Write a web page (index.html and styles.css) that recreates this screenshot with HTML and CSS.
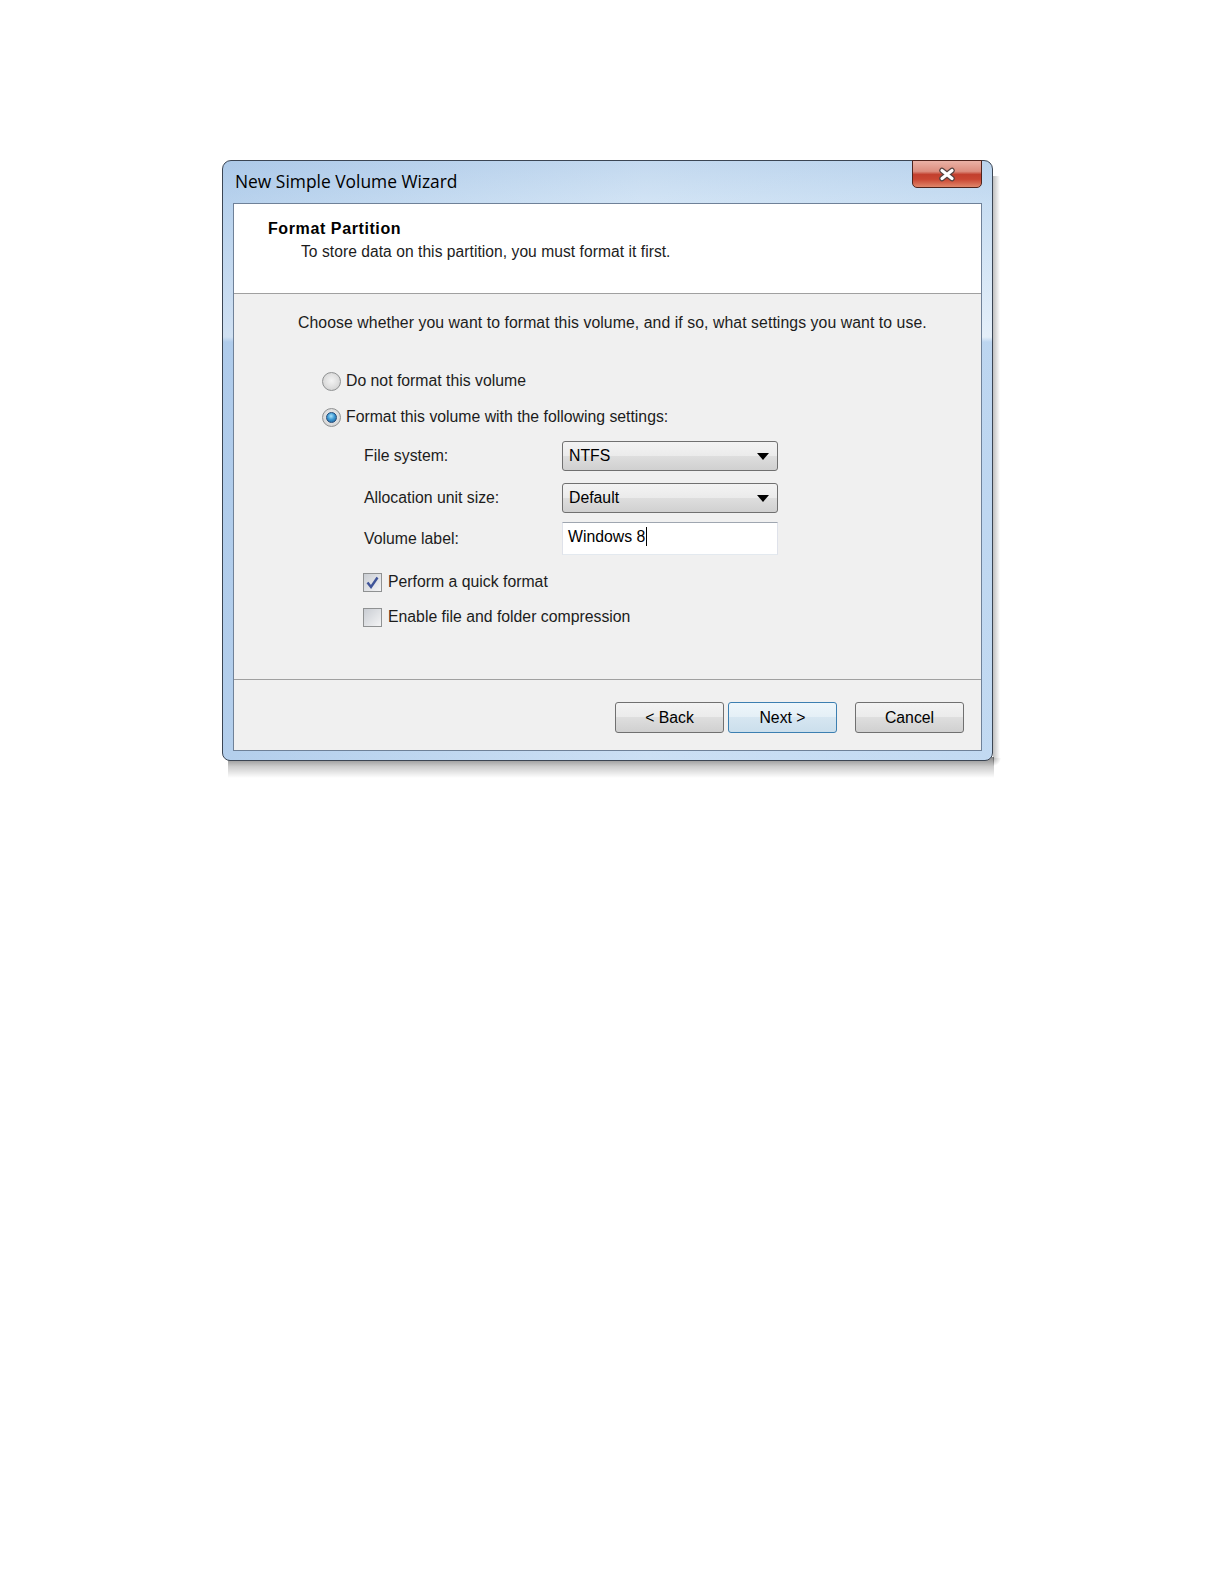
FILE: index.html
```html
<!DOCTYPE html>
<html>
<head lang="en">
    <meta charset="UTF-8">
    <title>New Simple Volume Wizard</title>
    <link rel="stylesheet" href="styles.css">
</head>
<body>
<div class="desk">
<div id="wizard" class="window">
    <div class="titlebar">
        <span class="caption">New Simple Volume Wizard</span>
        <span class="close">
            <svg width="20" height="15" viewBox="0 0 20 15">
                <path d="M5 3.5 L15 11.5 M15 3.5 L5 11.5" stroke="#55413f" stroke-width="5.5" stroke-linecap="round"/>
                <path d="M5 3.5 L15 11.5 M15 3.5 L5 11.5" stroke="#fff" stroke-width="3.2" stroke-linecap="round"/>
            </svg>
        </span>
    </div>
    <div class="client">
        <div class="header">
            <h1>Format Partition</h1>
            <p>To store data on this partition, you must format it first.</p>
        </div>
        <div class="content">
            <p class="intro">Choose whether you want to format this volume, and if so, what settings you want to use.</p>
            <div class="option first"><span class="radio"></span>Do not format this volume</div>
            <div class="option"><span class="radio checked"></span>Format this volume with the following settings:</div>
            <div class="settings">
                <div class="field first"><span class="label">File system:</span><span class="combo">NTFS<i class="arrow"></i></span></div>
                <div class="field"><span class="label">Allocation unit size:</span><span class="combo">Default<i class="arrow"></i></span></div>
                <div class="field last"><span class="label">Volume label:</span><span class="textbox">Windows 8<i class="caret"></i></span></div>
            </div>
            <div class="check first">
                <span class="box">
                    <svg width="13" height="13" viewBox="0 0 13 13">
                        <path d="M1.5 6.5 L5 11 L11.5 1.5" fill="none" stroke="#3f5499" stroke-width="2.4"/>
                    </svg>
                </span>Perform a quick format
            </div>
            <div class="check"><span class="box"></span>Enable file and folder compression</div>
        </div>
        <div class="footer">
            <span class="btn back">&lt; Back</span>
            <span class="btn default">Next &gt;</span>
            <span class="btn">Cancel</span>
        </div>
    </div>
</div>
</div>
</body>
</html>
```

FILE: styles.css
```css
body, h1, p {
    margin: 0;
    padding: 0;
}

body {
    background: #fff;
    font-family: "Liberation Sans", Arial, sans-serif;
    font-size: 15.8px;
    color: #1c1c1c;
}

/* window shadow, drawn with gradients around the frame */
.desk {
    width: 771px;
    margin: 160px 0 0 222px;
    padding: 0 8px 18px 0;
    background:
        linear-gradient(to bottom, rgba(0, 0, 0, 0.48), rgba(0, 0, 0, 0.2) 45%, rgba(0, 0, 0, 0)) no-repeat 6px 597px / 766px 21px,
        linear-gradient(to right, rgba(0, 0, 0, 0.25), rgba(0, 0, 0, 0)) no-repeat 771px 16px / 7px 582px,
        radial-gradient(circle at 0 0, rgba(0, 0, 0, 0.3), rgba(0, 0, 0, 0) 8px) no-repeat 771px 598px / 8px 12px;
}

.window {
    width: 771px;
    height: 601px;
    box-sizing: border-box;
    padding: 0 10px 9px;
    border: 1px solid #3b4553;
    border-radius: 9px 9px 8px 8px;
    background:
        linear-gradient(to right, rgba(150, 185, 225, 0.35), rgba(255, 255, 255, 0.15) 55%, rgba(190, 215, 240, 0.2)),
        linear-gradient(to bottom, #b9d2ec 0, #cadff3 42px, #dceaf7 110px, #e9f2fb 160px, #eef5fb 176px, #bcd5f0 181px, #c3daf2 100%);
}

.titlebar {
    height: 42px;
    display: flex;
    justify-content: space-between;
    align-items: flex-start;
}

.caption {
    align-self: center;
    padding: 0 0 2px 2px;
    font-family: "Open Sans", sans-serif;
    font-size: 17.4px;
    color: #000;
}

.close {
    width: 70px;
    height: 28px;
    box-sizing: border-box;
    margin-top: -1px;
    border: 1px solid #4f241d;
    border-radius: 0 0 5px 5px;
    background: linear-gradient(to bottom, #eab2a6 0, #dc8d7e 40%, #c2402e 52%, #c94632 70%, #e0866a 100%);
    display: flex;
    justify-content: center;
    align-items: center;
}

.client {
    height: 548px;
    box-sizing: border-box;
    border: 1px solid #6f8198;
    background: #f0f0f0;
    display: flex;
    flex-direction: column;
}

.header {
    height: 90px;
    box-sizing: border-box;
    padding: 15px 0 0 34px;
    background: #fff;
    border-bottom: 1px solid #a0a0a0;
}

.header h1 {
    font-size: 16px;
    line-height: 20px;
    font-weight: bold;
    letter-spacing: 0.6px;
    color: #000;
}

.header p {
    margin: 3px 0 0 33px;
    font-size: 15.6px;
    line-height: 20px;
    letter-spacing: 0.05px;
}

.content {
    height: 385px;
    box-sizing: border-box;
    padding: 19px 0 0 64px;
}

.intro {
    line-height: 20px;
    letter-spacing: 0.07px;
}

.option {
    display: flex;
    align-items: center;
    height: 24px;
    margin: 12px 0 0 24px;
}

.option.first {
    margin-top: 36px;
}

.radio {
    width: 19px;
    height: 19px;
    box-sizing: border-box;
    margin-right: 5px;
    border: 1px solid #8f9192;
    border-radius: 50%;
    background: radial-gradient(circle at 50% 45%, #f4f4f4 0, #e2e2e2 45%, #c9c9c9 100%);
    display: flex;
    justify-content: center;
    align-items: center;
}

.radio.checked::after {
    content: "";
    width: 9px;
    height: 9px;
    border: 1px solid #234a78;
    border-radius: 50%;
    background: radial-gradient(circle at 45% 35%, #a9e2fa 0, #3f9ad4 45%, #1a5a92 100%);
}

.settings {
    margin: 12px 0 0 66px;
}

.field {
    display: flex;
    align-items: center;
    margin-top: 12px;
}

.field.first {
    margin-top: 0;
}

.field.last {
    margin-top: 9px;
}

.label {
    width: 198px;
}

.combo {
    width: 216px;
    height: 30px;
    box-sizing: border-box;
    padding: 0 8px 0 6px;
    border: 1px solid #707070;
    border-radius: 3px;
    background: linear-gradient(to bottom, #f3f3f3 0, #ebebeb 50%, #dedede 50%, #d0d0d0 100%);
    display: flex;
    justify-content: space-between;
    align-items: center;
    color: #000;
}

.arrow {
    width: 0;
    height: 0;
    border-left: 6px solid transparent;
    border-right: 6px solid transparent;
    border-top: 7px solid #000;
}

.textbox {
    width: 216px;
    height: 33px;
    box-sizing: border-box;
    padding: 0 0 4px 5px;
    border: 1px solid;
    border-color: #9fa6b0 #dfe2ea #e3e9ef #dfe2ea;
    background: #fff;
    display: flex;
    align-items: center;
    color: #000;
}

.caret {
    width: 1px;
    height: 19px;
    margin-left: 1px;
    background: #000;
}

.check {
    display: flex;
    align-items: center;
    height: 24px;
    margin: 11px 0 0 65px;
}

.check.first {
    margin-top: 15px;
}

.box {
    width: 19px;
    height: 19px;
    box-sizing: border-box;
    margin-right: 6px;
    border: 1px solid #8f9192;
    background: linear-gradient(to bottom right, #c9cdd3, #f4f4f5);
    display: flex;
    justify-content: center;
    align-items: center;
}

.footer {
    flex: 1;
    display: flex;
    justify-content: flex-end;
    align-items: flex-start;
    padding: 22px 17px 0 0;
    border-top: 1px solid #a0a0a0;
}

.btn {
    width: 109px;
    height: 31px;
    box-sizing: border-box;
    border: 1px solid #707070;
    border-radius: 3px;
    background: linear-gradient(to bottom, #f3f3f3 0, #ebebeb 50%, #dedede 50%, #d0d0d0 100%);
    display: flex;
    justify-content: center;
    align-items: center;
    color: #000;
}

.btn.back {
    margin-right: 4px;
}

.btn.default {
    margin-right: 18px;
    border-color: #3c7fb1;
    background: linear-gradient(to bottom, #eef6fb 0, #e4eff6 50%, #d6e6f1 50%, #cbdfec 100%);
}
```
